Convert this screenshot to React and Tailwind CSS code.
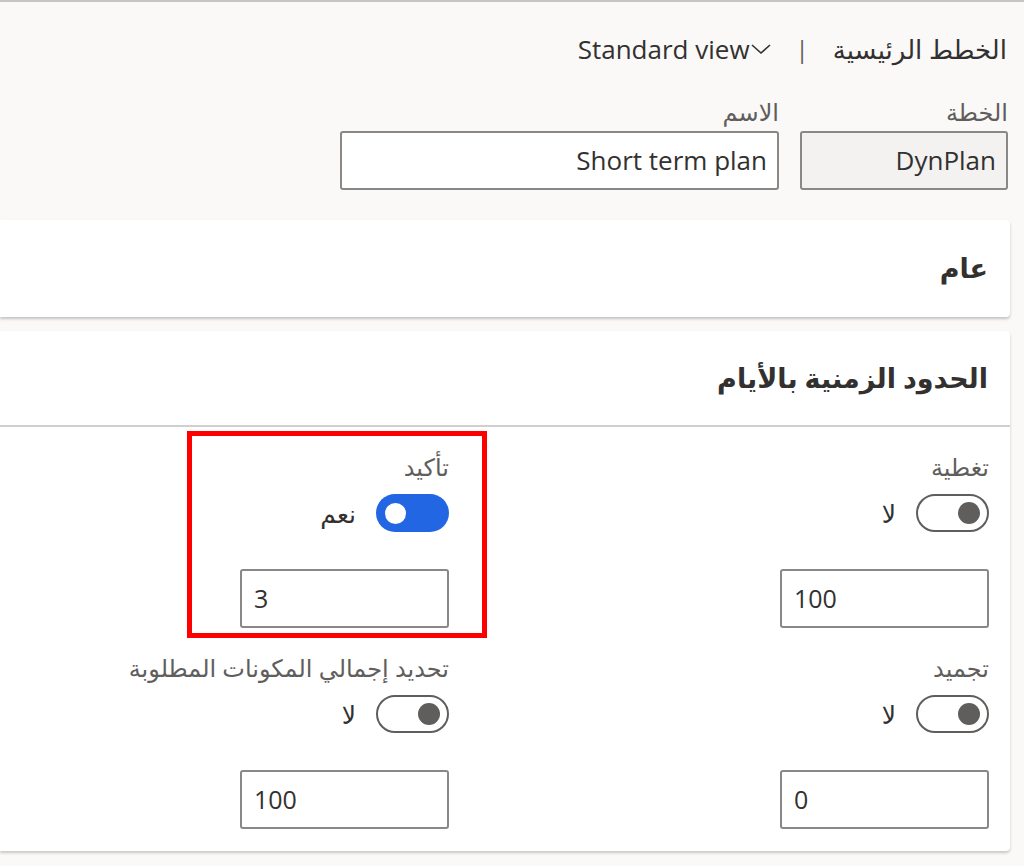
import React from 'react'

const Toggle = ({ on }) => (
  <div
    className={
      on
        ? 'w-[73px] h-[38px] rounded-full bg-[#2266e3] flex items-center justify-end px-[9px]'
        : 'w-[73px] h-[38px] rounded-full border-2 border-[#605e5c] bg-white flex items-center justify-start px-[7px]'
    }
  >
    <div className={on ? 'w-[21px] h-[21px] rounded-full bg-white' : 'w-[22px] h-[22px] rounded-full bg-[#605e5c]'} />
  </div>
)

const Field = ({ label, on, value }) => (
  <div className="w-[209px] flex flex-col">
    <div className="h-[30px] text-[24px] leading-[30px] text-[#605e5c] whitespace-nowrap">{label}</div>
    <div className="flex items-center gap-[20px] mt-[12px]">
      <Toggle on={on} />
      <span className="text-[25px] leading-[30px] text-[#323130]">{on ? 'نعم' : 'لا'}</span>
    </div>
    <div className="mt-[37px] h-[59px] border-2 border-[#8a8886] rounded-[3px] bg-white flex items-center px-[12px]" dir="ltr">
      <span className="text-[25px] text-[#323130]">{value}</span>
    </div>
  </div>
)

export default function App() {
  return (
    <div
      dir="rtl"
      className="w-[1024px] h-[866px] overflow-hidden bg-[#faf9f8] border-t-2 border-[#c8c6c4] text-[#323130]"
      style={{ fontFamily: '"Open Sans", "DejaVu Sans", sans-serif' }}
    >
      <div className="pr-[17px] pt-[26px] flex items-center h-[42px] box-content">
        <span className="text-[26px]">الخطط الرئيسية</span>
        <span className="mx-[24px] text-[24px] text-[#605e5c]">|</span>
        <span className="flex items-center text-[26px]">
          <svg width="22" height="14" viewBox="0 0 22 14" fill="none" stroke="#323130" strokeWidth="1.6">
            <path d="M2 3 L11 11 L20 3" />
          </svg>
          <span dir="ltr">Standard view</span>
        </span>
      </div>

      <div className="pr-[16px] mt-[28px] flex gap-[21px]">
        <div className="w-[208px]">
          <div className="text-[24px] leading-[28px] text-[#605e5c]">الخطة</div>
          <div className="mt-[5px] h-[59px] border-2 border-[#8a8886] rounded-[3px] bg-[#f3f2f1] flex items-center px-[10px] text-[26px]">
            DynPlan
          </div>
        </div>
        <div className="w-[439px]">
          <div className="text-[24px] leading-[28px] text-[#605e5c]">الاسم</div>
          <div className="mt-[5px] h-[59px] border-2 border-[#8a8886] rounded-[3px] bg-white flex items-center px-[10px] text-[26px]">
            Short term plan
          </div>
        </div>
      </div>

      <div className="mr-[14px] mt-[30px] bg-white rounded-r-[4px] shadow-[0_2px_3px_rgba(0,0,0,0.22)] h-[97px] flex items-center pr-[22px]">
        <span className="text-[27px] font-semibold">عام</span>
      </div>

      <div className="mr-[14px] mt-[14px] bg-white rounded-r-[4px] shadow-[0_2px_3px_rgba(0,0,0,0.2)] pb-[22px]">
        <div className="h-[96px] flex items-center pr-[22px] border-b-2 border-[#d2d0ce]">
          <span className="text-[27px] font-semibold">الحدود الزمنية بالأيام</span>
        </div>
        <div className="relative pr-[21px] pt-[25px] grid grid-cols-[209px_209px] gap-x-[331px] gap-y-[25px]">
          <Field label="تغطية" on={false} value="100" />
          <Field label="تأكيد" on={true} value="3" />
          <Field label="تجميد" on={false} value="0" />
          <Field label="تحديد إجمالي المكونات المطلوبة" on={false} value="100" />
          <div className="absolute left-[187px] top-[4px] w-[300px] h-[207px] border-[5px] border-[#ff0000] pointer-events-none" />
        </div>
      </div>
    </div>
  )
}
